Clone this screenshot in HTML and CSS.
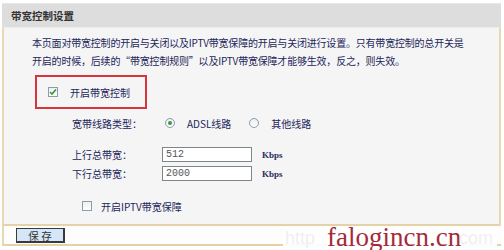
FILE: index.html
```html
<!DOCTYPE html>
<html lang="zh-CN">
<head>
    <meta charset="UTF-8">
    <title>带宽控制设置</title>
    <link rel="stylesheet" href="styles.css">
</head>
<body>
    <div class="panel">
        <div class="panel-head">带宽控制设置</div>
        <div class="panel-body">
            <p class="intro">本页面对带宽控制的开启与关闭以及IPTV带宽保障的开启与关闭进行设置。只有带宽控制的总开关是<br>开启的时候，后续的“带宽控制规则”以及IPTV带宽保障才能够生效，反之，则失效。</p>
            <div class="switch-box">
                <span class="check checked">
                    <svg width="8" height="8" viewBox="0 0 8 8"><path d="M1 4 L3 6 L7 1.5" fill="none" stroke="#2f9a34" stroke-width="1.6"/></svg>
                </span>
                <span>开启带宽控制</span>
            </div>
            <div class="form">
                <div class="row row-type">
                    <span class="label">宽带线路类型：</span>
                    <span class="radio checked"></span>
                    <span class="radio-text">ADSL线路</span>
                    <span class="radio"></span>
                    <span class="radio-text">其他线路</span>
                </div>
                <div class="row row-up">
                    <span class="label">上行总带宽：</span>
                    <input class="field" type="text" value="512">
                    <span class="unit">Kbps</span>
                </div>
                <div class="row row-down">
                    <span class="label">下行总带宽：</span>
                    <input class="field" type="text" value="2000">
                    <span class="unit">Kbps</span>
                </div>
                <div class="row row-iptv">
                    <span class="check"></span>
                    <span>开启IPTV带宽保障</span>
                </div>
            </div>
        </div>
        <div class="panel-foot">
            <button class="save-btn">保 存</button>
        </div>
    </div>

    <div class="watermark">
        <span class="wm-faint wm-left">http</span>
        <span class="wm-text">falogincn.cn</span>
        <span class="wm-faint wm-right">com</span>
    </div>
</body>
</html>
```

FILE: styles.css
```css
body, html {
    margin: 0;
    padding: 0;
    background-color: #ffffff;
    font-family: "Noto Sans CJK SC", "Noto Sans", sans-serif;
    font-size: 10px;
    color: #23265a;
}
.panel {
    width: 499px;
    margin: 3px 0 0 2px;
}
.panel-head {
    height: 24px;
    line-height: 24px;
    padding-left: 9px;
    background-color: #dddddd;
    border-top: 1px solid #e6e6e6;
    box-sizing: border-box;
    font-size: 10.5px;
    font-weight: bold;
    color: #333333;
}
.panel-body {
    background-color: #f5f5f5;
    border-left: 2px solid #ead8b4;
    border-right: 2px solid #ead8b4;
    border-bottom: 2px solid #e6d2a8;
    border-top: 1px solid #ececec;
    padding: 6px 0 10px 0;
}
.intro {
    margin: 0;
    padding-left: 28px;
    line-height: 18px;
    letter-spacing: -0.2px;
    white-space: nowrap;
}
.switch-box {
    display: flex;
    align-items: center;
    gap: 12px;
    width: 112px;
    height: 34px;
    box-sizing: border-box;
    margin: 5px 0 0 31px;
    padding-left: 11px;
    border: 2px solid #d8343e;
}
.check {
    display: inline-flex;
    align-items: center;
    justify-content: center;
    width: 10px;
    height: 10px;
    box-sizing: border-box;
    border: 1px solid #8c9cae;
    background: linear-gradient(#f0f0ec, #ffffff);
}
.form {
    padding-left: 68px;
}
.row {
    display: flex;
    align-items: center;
}
.label {
    width: 91px;
}
.row-type {
    height: 16px;
    margin-top: 6px;
}
.radio {
    display: inline-flex;
    align-items: center;
    justify-content: center;
    width: 10px;
    height: 10px;
    box-sizing: border-box;
    margin-left: 2px;
    border: 1px solid #8c9cae;
    border-radius: 50%;
    background: linear-gradient(#ececec, #ffffff);
}
.radio.checked::after {
    content: "";
    width: 4px;
    height: 4px;
    border-radius: 50%;
    background-color: #3a9b3e;
}
.radio-text {
    margin-left: 12px;
    margin-right: 16px;
}
.row-up {
    height: 15px;
    margin-top: 16px;
}
.row-down {
    height: 15px;
    margin-top: 4px;
}
.field {
    width: 90px;
    height: 15px;
    box-sizing: border-box;
    margin: 0 0 0 -1px;
    padding: 0 0 0 3px;
    border: 1px solid #7c878c;
    background-color: #ffffff;
    font-family: "Liberation Mono", monospace;
    font-size: 10px;
    color: #555555;
}
.unit {
    margin-left: 10px;
    font-family: "Liberation Serif", serif;
    font-size: 9px;
    font-weight: bold;
    color: #2a2d5e;
}
.row-iptv {
    height: 16px;
    margin-top: 17px;
    padding-left: 10px;
    gap: 9px;
}
.panel-foot {
    height: 16px;
    padding: 2px 0 0 12px;
    border-left: 2px solid #ead8b4;
    border-bottom: 2px solid #e6d2a8;
    background-color: #fdfdfd;
}
.save-btn {
    display: block;
    width: 49px;
    height: 15px;
    padding: 0;
    border: 1px solid #3a3a3a;
    border-right-width: 2px;
    border-bottom-width: 2px;
    background-color: #d4e6f7;
    font-family: "Noto Sans CJK SC", sans-serif;
    font-size: 10.5px;
    line-height: 11px;
    color: #333333;
}
.watermark {
    position: absolute;
    left: 283px;
    top: 227px;
    width: 214px;
    height: 23px;
    background-color: rgba(255, 255, 255, 0.92);
}
.wm-faint {
    position: absolute;
    top: 1px;
    font-family: "Liberation Sans", sans-serif;
    font-size: 18px;
    line-height: 20px;
    color: #efefef;
}
.wm-left {
    left: 2px;
}
.wm-right {
    right: 4px;
}
.wm-text {
    position: absolute;
    left: 44px;
    top: -3px;
    font-family: "Liberation Serif", serif;
    font-size: 27px;
    line-height: 27px;
    color: #a52a3a;
    white-space: nowrap;
}
```
